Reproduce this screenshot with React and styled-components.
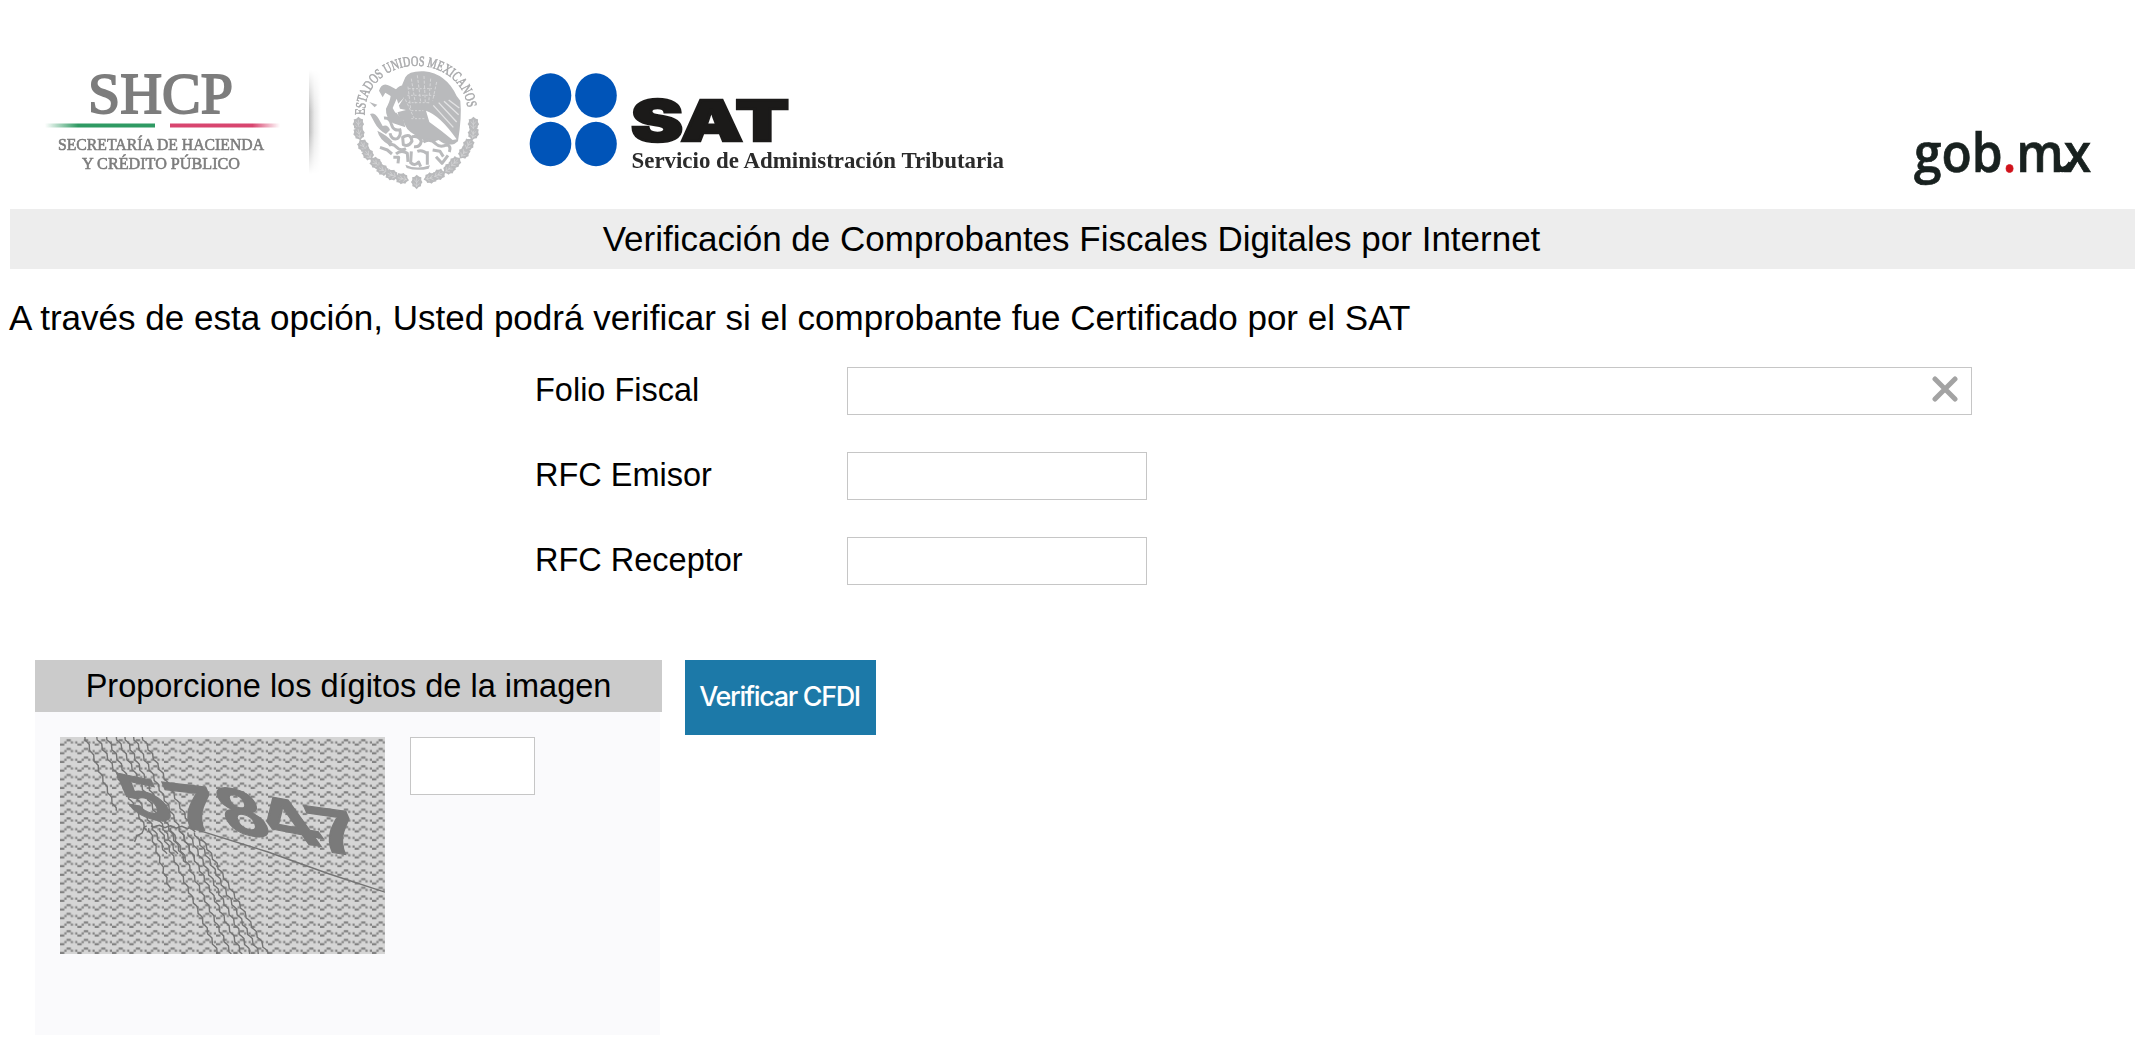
import React from "react";
import styled, { createGlobalStyle } from "styled-components";

const GlobalStyle = createGlobalStyle`
  body {
    margin: 0;
    background: #fff;
    color: #000;
    font-family: "Liberation Sans", Arial, sans-serif;
  }
  * { box-sizing: border-box; }
`;

const Page = styled.div`
  width: 2147px;
  height: 1048px;
  overflow: hidden;
`;

const Header = styled.header`
  display: flex;
  align-items: flex-start;
  height: 209px;
  padding: 40px 48px 0 40px;
`;

const Logo = styled.svg`
  flex: none;
  display: block;
  margin-left: ${(p) => p.$left || 0}px;
  filter: blur(0.6px);
`;

const Divider = styled.div`
  width: 12px;
  height: 104px;
  margin: 30px 0 0 19px;
  background: linear-gradient(90deg, #bcbcbc, #e9e9e9 45%, #fff);
  mask-image: linear-gradient(transparent, #000 40%, #000 60%, transparent);
`;

const TitleBar = styled.h1`
  margin: 0 12px 0 10px;
  padding-right: 2px;
  height: 60px;
  line-height: 59px;
  background: #ededed;
  text-align: center;
  font-size: 35px;
  font-weight: 400;
`;

const Intro = styled.p`
  margin: 0 0 0 9px;
  font-size: 35.04px;
  line-height: 98px;
`;

const Form = styled.form`
  display: flex;
  flex-direction: column;
  gap: 37px;
  padding-left: 535px;
`;

const Field = styled.label`
  display: flex;
  height: 48px;
  font-size: 32.5px;
  line-height: 46px;
`;

const FieldName = styled.span`
  width: 312px;
`;

const InputBox = styled.span`
  display: flex;
  align-items: center;
  width: ${(p) => p.$width}px;
  height: ${(p) => p.$height || 48}px;
  padding-right: 13px;
  border: 1px solid #c6c6c6;
  background: #fff;
`;

const Input = styled.input`
  flex: 1;
  min-width: 0;
  height: 100%;
  border: 0;
  outline: 0;
  background: transparent;
  font: 28px "Liberation Sans", Arial, sans-serif;
`;

const ClearIcon = styled.svg`
  flex: none;
  width: 26px;
  height: 26px;
  margin-top: -4px;
  filter: blur(0.7px);
`;

const Lower = styled.section`
  display: flex;
  align-items: flex-start;
  gap: 23px;
  padding: 75px 0 0 35px;
`;

const Panel = styled.div`
  width: 627px;
`;

const PanelTitle = styled.h2`
  margin: 0;
  height: 52px;
  line-height: 52px;
  background: #cbcbcb;
  text-align: center;
  font-size: 32.5px;
  font-weight: 400;
`;

const PanelBody = styled.div`
  display: flex;
  align-items: flex-start;
  gap: 25px;
  width: 625px;
  height: 323px;
  padding: 25px;
  background: #fafafc;
`;

const Button = styled.button`
  width: 191px;
  height: 75px;
  padding: 0 2px 1px 0;
  border: 0;
  background: #1c79a8;
  color: #fff;
  font: 500 27px/72px Inter, sans-serif;
  letter-spacing: -1.35px;
  white-space: nowrap;
`;

const ShcpLogo = () => (
  <Logo width="250" height="150" viewBox="40 40 250 150">
    <defs>
      <linearGradient id="green" x1="0" x2="1">
        <stop offset="0" stopColor="#2f9a63" stopOpacity="0" />
        <stop offset=".3" stopColor="#2f9a63" />
      </linearGradient>
      <linearGradient id="pink" x1="0" x2="1">
        <stop offset=".75" stopColor="#d8456f" />
        <stop offset="1" stopColor="#d8456f" stopOpacity="0" />
      </linearGradient>
    </defs>
    <g fill="#7d7d7d" stroke="#7d7d7d" fontFamily="'Liberation Serif', serif">
      <text x="88" y="112.5" fontSize="56" strokeWidth="1.8" textLength="145" lengthAdjust="spacingAndGlyphs">SHCP</text>
      <text x="58" y="149.5" fontSize="17.5" strokeWidth=".6" textLength="206" lengthAdjust="spacingAndGlyphs">SECRETARÍA DE HACIENDA</text>
      <text x="82" y="168.5" fontSize="17.5" strokeWidth=".6" textLength="158" lengthAdjust="spacingAndGlyphs">Y CRÉDITO PÚBLICO</text>
    </g>
    <rect x="45" y="123.5" width="110" height="4" fill="url(#green)" />
    <rect x="170" y="123.5" width="110" height="4" fill="url(#pink)" />
  </Logo>
);

const WREATH = [
  [55, 252, 0], [57, 280, -12], [70, 318, -30], [84, 343, -38], [108, 370, -48], [128, 390, -56],
  [155, 405, -68], [186, 416, -78], [230, 426, 0], [272, 414, 78], [296, 404, 66], [328, 386, 52],
  [344, 368, 46], [372, 338, 34], [385, 314, 26], [400, 280, 10], [400, 252, 0],
];

const Seal = () => (
  <Logo $left={23} width="138" height="150" viewBox="344 40 138 150">
    <defs>
      <path id="sealArc" d="M74 226 C74 28 384 28 384 226" />
    </defs>
    <g transform="translate(340 40) scale(.3333)" fill="#b9babc" stroke="none">
      <text fontSize="43" fontFamily="'Liberation Serif', serif" fill="#a8a9ab" stroke="#a8a9ab" strokeWidth="1.6">
        <textPath href="#sealArc" textLength="458" lengthAdjust="spacingAndGlyphs">ESTADOS UNIDOS MEXICANOS</textPath>
      </text>
      {WREATH.map(([x, y, r], i) => (
        <g key={i} transform={`translate(${x} ${y}) rotate(${r}) scale(1.08)`}>
          <path d="M0 -20 Q8 -13 13 -13 Q11 -5 16 1 Q11 5 12 12 Q5 12 0 20 Q-6 12 -12 12 Q-10 5 -16 0 Q-10 -5 -13 -13 Q-6 -12 0 -20Z" />
          <path d="M0 -12V14M-7 -7L0 2L7 -7M-8 4L0 11L8 4" fill="none" stroke="#dcdcdd" strokeWidth="1.5" />
        </g>
      ))}
      <path d="M196 112 Q206 92 252 94 Q318 100 350 168 L361 182 Q366 232 354 304 L343 312 Q316 318 296 300 Q262 314 226 286 Q194 268 190 240 Q168 226 172 204 L190 176 Q196 150 186 136Z" />
      <path d="M117 152 Q126 124 150 138 L168 148 Q180 134 194 136 Q204 156 188 178 L162 204 Q168 224 190 236 L196 262 L160 250 Q136 234 138 206 Q150 184 152 168 L136 158 L128 172Z" />
      <path d="M170 176 L180 206 L198 210 L166 218 L158 204Z" fill="#fff" />
      <path d="M258 212 Q300 226 350 298 L338 300 Q302 270 268 246Z" fill="#fff" />
      <g fill="none" stroke="#e4e4e5" strokeWidth="4">
        <path d="M280 196L340 262M296 188L350 246M312 184L356 224M326 180L358 204" />
        <path d="M214 116L226 190M232 106L242 184M252 108L256 190M272 116L266 190M290 126L278 182M204 140L212 206M196 178L222 234" strokeWidth="2" strokeDasharray="9 5" />
        <path d="M202 166H286M206 146H276M204 188H266M214 212H250M214 236H254" strokeWidth="2" strokeDasharray="6 5" />
      </g>
      <path d="M88 186 L112 194 L104 202Z M90 222 Q104 216 116 236 L128 258 Q144 252 150 270 L138 282 Q114 268 104 248Z M112 272 Q142 286 158 306 L146 314 Q118 298 112 272Z" />
      <g fill="none" stroke="#b9babc" strokeWidth="9" strokeLinejoin="round">
        <path d="M132 234 Q150 232 154 252 Q160 276 184 268 M150 280 Q154 300 172 296 Q184 286 180 272" />
        <path d="M188 292 Q212 276 216 304 Q206 322 190 314Z M216 290 Q238 286 244 304 Q240 322 222 320 M250 306 Q270 292 288 312 Q300 324 322 314 Q334 320 328 336" />
        <path d="M146 316 Q158 308 170 322 Q180 334 198 326 M168 342 Q184 328 202 340 L204 366 M120 322 L142 330 L156 342 M160 352 L176 352 L174 370" />
        <path d="M214 334 L212 368 Q224 380 236 366 L242 380 M232 334 Q248 328 262 342 M262 334 V374 M278 330 L300 334 L310 350 M288 350 L306 370 L324 346" />
      </g>
      <path d="M196 374 Q228 390 270 376 L266 386 Q230 394 200 384Z" />
    </g>
  </Logo>
);

const SatLogo = () => (
  <Logo $left={38} width="490" height="150" viewBox="520 40 490 150">
    {[95.5, 144].map((cy) =>
      [550.5, 596].map((cx) => <ellipse key={`${cx}-${cy}`} cx={cx} cy={cy} rx="20.8" ry="22.2" fill="#0054b8" />)
    )}
    <text x="631" y="141" fontFamily="Inter, sans-serif" fontWeight="900" fontSize="56" fill="#1b1a19" stroke="#1b1a19" strokeWidth="2.5" textLength="158" lengthAdjust="spacingAndGlyphs">SAT</text>
    <text x="631.5" y="168" fontFamily="'Liberation Serif', serif" fontWeight="700" fontSize="22.5" fill="#2b2b2b" textLength="372.5" lengthAdjust="spacingAndGlyphs">Servicio de Administración Tributaria</text>
  </Logo>
);

const GobLogo = () => (
  <Logo $left={901} width="182" height="150" viewBox="1910 40 182 150">
    <text x="1913" y="172" fontFamily="'Open Sans', sans-serif" fontWeight="600" fontSize="55" fill="#18211f" stroke="#18211f" strokeWidth=".7" textLength="177" lengthAdjust="spacingAndGlyphs">
      gob<tspan fill="#d0121b" stroke="#d0121b">.</tspan>mx
    </text>
    <path d="M2056 160 Q2056 169.5 2061.5 169.5 Q2066 169.5 2070 163" fill="none" stroke="#18211f" strokeWidth="5.5" />
  </Logo>
);

const DIGITS = [
  { d: "5", bl: [34.6, 36], u: [18.3, 3.9], v: [9.8, 19.8] },
  { d: "7", bl: [56, 41.9], u: [20.5, 2.4], v: [9.1, 21.2] },
  { d: "8", bl: [80, 43.9], u: [17.8, 3], v: [9.6, 21.5] },
  { d: "4", bl: [102.3, 47], u: [21, 4], v: [15.4, 21.5] },
  { d: "7", bl: [121.5, 52.6], u: [19.8, 2.8], v: [9.2, 21.2] },
];

const STROKES = [
  [11.5, 0, 26, 34], [17, 0, 40, 43], [21.5, 0, 49, 54], [26, 0, 54, 54], [30, 0, 58, 58], [34, 0, 62, 56], [38, 0, 62, 44],
  [41, 42, 51, 71], [40, 41, 34, 48], [46, 42, 73, 100], [51, 42, 79, 100], [55, 42, 84, 100], [59, 44, 88, 100],
  [62, 44, 92, 100], [65, 46, 96, 100], [42, 41, 64, 42],
];

// Hand-drawn looking line: small alternating offsets along its normal.
const jagged = ([x1, y1, x2, y2]) => {
  const len = Math.hypot(x2 - x1, y2 - y1);
  const n = Math.max(2, Math.round(len / 1.3));
  const nx = -(y2 - y1) / len;
  const ny = (x2 - x1) / len;
  return Array.from({ length: n + 1 }, (_, i) => {
    const o = [0, 0.5, -0.1, -0.5][i % 4];
    return `${(x1 + ((x2 - x1) * i) / n + nx * o).toFixed(2)},${(y1 + ((y2 - y1) * i) / n + ny * o).toFixed(2)}`;
  }).join(" ");
};

// Maps a glyph box of 48 x 69 units onto the parallelogram spanned by u and v.
const glyphMatrix = ({ bl, u, v }) =>
  `matrix(${u[0] / 48} ${u[1] / 48} ${v[0] / 69} ${v[1] / 69} ${bl[0] - u[0] / 12} ${bl[1] - u[1] / 12})`;

const CaptchaSvg = styled.svg`
  flex: none;
  width: 325px;
  height: 217px;
`;

const Captcha = () => (
  <CaptchaSvg viewBox="0 0 150 100" preserveAspectRatio="none">
    <defs>
      <pattern id="waves" width="8" height="4" patternUnits="userSpaceOnUse">
        <rect width="8" height="4" fill="#d5d5d5" />
        <path d="M3 1h2v1h-2zM2 2h1v1h-1zM5 2h1v1h-1zM7 2h1v1h-1zM0 3h2v1h-2z" fill="#808080" />
      </pattern>
    </defs>
    <rect width="150" height="100" fill="url(#waves)" />
    <g fill="none" stroke="#747474" strokeWidth=".65">
      {STROKES.map((s, i) => <polyline key={i} points={jagged(s)} />)}
      <path d="M64 43 L96 53 L124 63 L150 71.5" />
    </g>
    <g fill="#7a7a7a" stroke="#7a7a7a" strokeWidth="2" fontFamily="'Liberation Sans', sans-serif" fontWeight="700" fontSize="100">
      {DIGITS.map((digit, i) => (
        <text key={i} transform={glyphMatrix(digit)}>{digit.d}</text>
      ))}
    </g>
  </CaptchaSvg>
);

export default function App() {
  return (
    <Page>
      <GlobalStyle />
      <Header>
        <ShcpLogo />
        <Divider />
        <Seal />
        <SatLogo />
        <GobLogo />
      </Header>
      <TitleBar>Verificación de Comprobantes Fiscales Digitales por Internet</TitleBar>
      <Intro>A través de esta opción, Usted podrá verificar si el comprobante fue Certificado por el SAT</Intro>
      <Form>
        <Field>
          <FieldName>Folio Fiscal</FieldName>
          <InputBox $width={1125}>
            <Input />
            <ClearIcon viewBox="0 0 26 26">
              <path d="M3 3L23 23M23 3L3 23" stroke="#a3a3a3" strokeWidth="5" strokeLinecap="round" />
            </ClearIcon>
          </InputBox>
        </Field>
        <Field>
          <FieldName>RFC Emisor</FieldName>
          <InputBox $width={300}><Input /></InputBox>
        </Field>
        <Field>
          <FieldName>RFC Receptor</FieldName>
          <InputBox $width={300}><Input /></InputBox>
        </Field>
      </Form>
      <Lower>
        <Panel>
          <PanelTitle>Proporcione los dígitos de la imagen</PanelTitle>
          <PanelBody>
            <Captcha />
            <InputBox $width={125} $height={58}><Input /></InputBox>
          </PanelBody>
        </Panel>
        <Button type="button">Verificar CFDI</Button>
      </Lower>
    </Page>
  );
}
